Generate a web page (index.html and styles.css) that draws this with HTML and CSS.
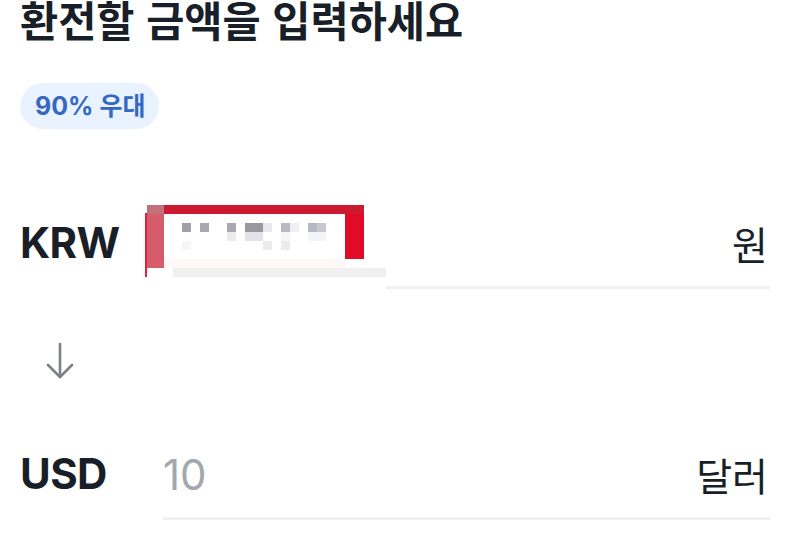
FILE: index.html
```html
<!doctype html>
<html lang="ko">
<head>
  <meta charset="utf-8">
  <title>환전</title>
  <link rel="stylesheet" href="styles.css">
</head>
<body>
  <div class="exchange">
    <h1 class="title">환전할 금액을 입력하세요</h1>
    <span class="badge">90% 우대</span>

    <div class="field field-from">
      <span class="code">KRW</span>
      <div class="input-wrap">
        <input class="amount" type="text" name="krw" value="">
        <span class="unit">원</span>
        <div class="redact" aria-hidden="true">
          <div class="r-line"></div>
          <div class="r-left"></div>
          <div class="r-top"></div>
          <div class="r-inner">
            <div class="px-row px-row-1"></div>
            <div class="px-row px-row-2"></div>
            <div class="px-row px-row-3"></div>
          </div>
          <div class="r-right"></div>
          <div class="r-foot"></div>
          <div class="r-band"></div>
        </div>
      </div>
    </div>

    <div class="swap">
      <svg width="30" height="40" viewBox="0 0 30 40" fill="none" stroke="#7b8089" stroke-width="2.6" stroke-linecap="round" stroke-linejoin="round">
        <path d="M15 3 V36"/>
        <path d="M3 24 L15 36 L27 24"/>
      </svg>
    </div>

    <div class="field field-to">
      <span class="code">USD</span>
      <div class="input-wrap">
        <input class="amount" type="text" name="usd" placeholder="10">
        <span class="unit">달러</span>
      </div>
    </div>
  </div>
</body>
</html>
```

FILE: styles.css
```css
body {
  margin: 0;
  background: #fff;
  color: #191f28;
  font-family: "Noto Sans CJK KR", sans-serif;
}
.exchange {
  display: flex;
  flex-direction: column;
  align-items: flex-start;
  padding: 0 32px 0 20px;
}
.title {
  margin: -6px 0 0;
  font-size: 41.5px;
  font-weight: 700;
  line-height: 50px;
}
.badge {
  margin-top: 39px;
  padding: 0 14px 0 15px;
  height: 46px;
  line-height: 46px;
  border-radius: 23px;
  background: #e8f3ff;
  color: #3568c2;
  font-family: "Inter", "Noto Sans CJK KR", sans-serif;
  font-size: 25px;
  font-weight: 700;
}

.field {
  display: grid;
  grid-template-columns: 143px minmax(0, 1fr);
  align-self: stretch;
}
.field-from {
  margin-top: 86px;
}
.code {
  font-family: "Inter", sans-serif;
  font-size: 42px;
  font-weight: 700;
  line-height: 56px;
  letter-spacing: -0.6px;
}
.input-wrap {
  position: relative;
  display: flex;
  align-items: center;
  min-width: 0;
  height: 56px;
  padding-bottom: 15px;
  border-bottom: 3px solid #f0f1f3;
}
.amount {
  flex: 1;
  width: 0;
  min-width: 0;
  height: 56px;
  padding: 0;
  border: none;
  outline: none;
  background: transparent;
  font-family: "Inter", sans-serif;
  font-size: 42px;
  color: #191f28;
}
.amount::placeholder {
  color: #a3a7ae;
}
.unit {
  font-size: 39px;
  line-height: 56px;
  margin-right: 2px;
}

.swap {
  padding: 52px 0 65px 25px;
  line-height: 0;
}

/* masked value */
.redact {
  position: absolute;
  left: -18px;
  top: -10px;
  display: grid;
  grid-template-columns: 2px 17px 181px 19px 22px;
  grid-template-rows: 9px 45px 9px 9px 13px;
  background: #fff;
}
.r-line {
  grid-column: 1;
  grid-row: 2 / 5;
  margin-top: -1px;
  background: #e41f3a;
}
.r-left {
  grid-column: 2;
  grid-row: 1 / 4;
  background: linear-gradient(#c4707a 9px, #d65c6c 9px);
}
.r-top {
  grid-column: 3 / 5;
  grid-row: 1;
  background: #cc1b30;
}
.r-right {
  grid-column: 4;
  grid-row: 2;
  background: #e20b27;
}
.r-inner {
  grid-column: 3;
  grid-row: 2;
  padding-top: 9px;
}
.r-foot {
  grid-column: 3;
  grid-row: 3;
  background: #fff8f9;
}
.r-band {
  grid-column: 3 / 6;
  grid-row: 4;
  margin-left: 9px;
  background: #f0f0f0;
}
.px-row {
  height: 9px;
}
.px-row-1 {
  background: linear-gradient(90deg,
    transparent 18px, #a0a0a8 18px 27px, transparent 27px 36px,
    #a8a8b0 36px 45px, transparent 45px 63px, #a8a8b0 63px 72px,
    transparent 72px 81px, #98989e 81px 99px, #e8e8ee 99px 108px,
    transparent 108px 117px, #b8b8c0 117px 126px, #f0f0f4 126px 135px,
    transparent 135px 144px, #b8b8c0 144px 153px, #c8c8d0 153px 162px,
    transparent 162px);
}
.px-row-2 {
  background: linear-gradient(90deg,
    transparent 63px, #ebebf0 63px 72px, transparent 72px 81px,
    #e2e2e8 81px 99px, transparent 99px 117px, #f6f6f8 117px 126px,
    transparent 126px 144px, #f4f4f6 144px 162px, transparent 162px);
}
.px-row-3 {
  background: linear-gradient(90deg,
    transparent 18px, #f6f6f8 18px 27px, transparent 27px 99px,
    #ebebef 99px 108px, transparent 108px 117px, #ececf0 117px 126px,
    transparent 126px);
}
```
